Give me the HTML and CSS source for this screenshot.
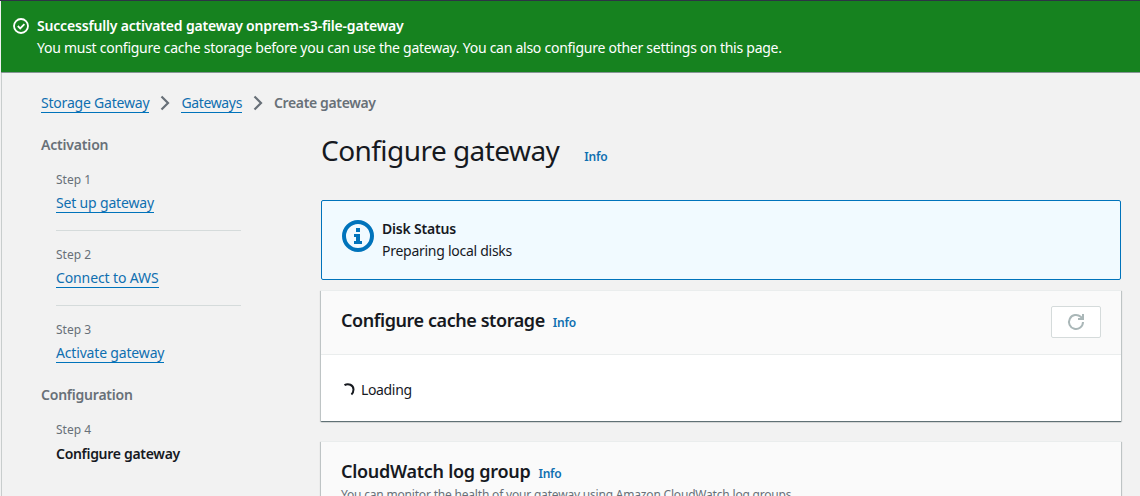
FILE: index.html
```html
<!DOCTYPE html>
<html lang="en">
<head>
<meta charset="utf-8">
<title>Configure gateway</title>
<link rel="stylesheet" href="styles.css">
</head>
<body>
<div class="flash">
  <svg class="flash-icon" viewBox="0 0 16 16"><circle cx="8" cy="8" r="7"/><path d="M4.8 8l2.4 2.4 4.2-4.3"/></svg>
  <div>
    <div class="flash-title"><span class="t-flash-title">Successfully activated gateway onprem-s3-file-gateway</span></div>
    <div><span class="t-flash-text">You must configure cache storage before you can use the gateway. You can also configure other settings on this page.</span></div>
  </div>
</div>
<div class="page">
  <nav class="breadcrumb">
    <a class="link t-crumb1">Storage Gateway</a>
    <svg class="chevron" viewBox="0 0 10 16"><path d="M1.5 1.5L8 8l-6.5 6.5"/></svg>
    <a class="link t-crumb2">Gateways</a>
    <svg class="chevron" viewBox="0 0 10 16"><path d="M1.5 1.5L8 8l-6.5 6.5"/></svg>
    <span class="current t-crumb3">Create gateway</span>
  </nav>
  <div class="columns">
    <aside class="steps">
      <div class="group t-activation">Activation</div>
      <div class="step divided"><div class="step-label">Step 1</div><a class="link t-setup">Set up gateway</a></div>
      <div class="step divided"><div class="step-label">Step 2</div><a class="link t-connect">Connect to AWS</a></div>
      <div class="step last"><div class="step-label">Step 3</div><a class="link t-activate">Activate gateway</a></div>
      <div class="group t-configuration">Configuration</div>
      <div class="step"><div class="step-label">Step 4</div><span class="active t-active">Configure gateway</span></div>
    </aside>
    <main class="content">
      <div class="heading"><h1>Configure gateway</h1><a class="info">Info</a></div>
      <section class="alert">
        <svg class="alert-icon" viewBox="0 0 32 32"><circle cx="16" cy="16" r="14"/><path d="M14 8h4v4h-4zM12 14h6v7h2v3h-8v-3h2v-4h-2z"/></svg>
        <div>
          <div><b class="t-disk">Disk Status</b></div>
          <div><span class="t-preparing">Preparing local disks</span></div>
        </div>
      </section>
      <section class="card">
        <header class="card-header">
          <div class="card-title"><h2 class="t-cache">Configure cache storage</h2><a class="info">Info</a></div>
          <button class="refresh" aria-label="Refresh">
            <svg viewBox="0 0 16 16"><path d="M15 8a7 7 0 1 1-2.3-5.2L15 5M15 0v5h-5"/></svg>
          </button>
        </header>
        <div class="card-body">
          <svg class="spinner" viewBox="0 0 16 16"><path d="M3.5 3.2C7.4.8 12.4 3 12.5 7.6c0 2-.8 3.7-2.1 4.8"/></svg>
          <span class="t-loading">Loading</span>
        </div>
      </section>
      <section class="card log-group">
        <header class="card-header">
          <div>
            <div class="card-title"><h2 class="t-log">CloudWatch log group</h2><a class="info">Info</a></div>
            <p class="description">You can monitor the health of your gateway using Amazon CloudWatch log groups.</p>
          </div>
        </header>
      </section>
    </main>
  </div>
</div>
</body>
</html>
```
FILE: styles.css
```css
* { box-sizing: border-box; }
body {
  margin: 0;
  height: 496px;
  overflow: hidden;
  border-top: 1px solid #2d3445;
  background: #f2f2f2;
  color: #16191f;
  font: 14px/22px "Noto Sans", "Open Sans", sans-serif;
  white-space: nowrap;
}
h1, h2, p { margin: 0; }
a { color: #0f6fb0; }

.flash {
  display: flex;
  gap: 8px;
  height: 72px;
  margin-left: 1px;
  padding: 14px 12px;
  border-bottom: 1px solid #879596;
  background: #16821f;
  color: #fff;
}
.flash-icon { width: 16px; height: 16px; margin-top: 3px; fill: none; stroke: #fff; stroke-width: 1.8; }
.flash-title { font-weight: 600; }

.page {
  height: 423px;
  overflow: hidden;
  margin-left: 1px;
  padding: 19px 19px 0 39px;
  border-left: 1px solid #c8cdcd;
}
.breadcrumb { display: flex; align-items: center; height: 22px; }
.breadcrumb .link { line-height: 18px; }
.chevron { width: 10px; height: 16px; margin: 0 11px; fill: none; stroke: #687078; stroke-width: 2.2; }
.link { display: inline-block; height: 19px; line-height: 20px; border-bottom: 1px solid #0073bb; }
.current, .group { color: #687078; font-weight: 600; }
.columns { display: flex; gap: 80px; margin-top: 20px; }

.steps { width: 200px; }
.step { height: 75px; margin-left: 15px; padding-top: 13px; }
.step.last { height: 78px; }
.divided { border-bottom: 1px solid #d5dbdb; }
.step-label { height: 22px; color: #687078; font-size: 12px; line-height: 22px; }
.step .link, .active { display: inline-block; margin-top: 2px; }
.step .link { height: 20px; }
.active { font-weight: 600; }

.content { flex: 1; }
.heading { display: flex; gap: 25px; align-items: baseline; height: 66px; }
h1 { font-size: 28px; font-weight: 400; line-height: 33px; }
.info { font-size: 12px; font-weight: 600; letter-spacing: -0.2px; }
.alert {
  display: flex;
  gap: 8px;
  height: 80px;
  padding: 17px 20px;
  border: 1px solid #0073bb;
  border-radius: 2px;
  background: #f1faff;
}
.alert-icon { width: 32px; height: 32px; margin-top: 2px; fill: #0073bb; }
.alert-icon circle { fill: none; stroke: #0073bb; stroke-width: 4; }
b { font-weight: 600; }

.card {
  margin-top: 10px;
  background: #fff;
  box-shadow: 0 1px 1px rgba(0, 28, 36, .45), 1px 1px 1px rgba(0, 28, 36, .15), -1px 1px 1px rgba(0, 28, 36, .15);
}
.card-header {
  display: flex;
  justify-content: space-between;
  height: 65px;
  padding: 15px 20px;
  border-top: 1px solid #eaeded;
  border-bottom: 1px solid #eaeded;
  background: #fafafa;
}
.card-title { display: flex; gap: 8px; align-items: baseline; height: 28px; }
h2 { font-size: 18px; font-weight: 600; line-height: 28px; }
.refresh {
  display: grid;
  place-items: center;
  width: 50px;
  height: 32px;
  margin: 0;
  padding: 0;
  border: 1px solid #d5dbdb;
  border-radius: 2px;
  background: #fff;
}
.refresh svg { width: 16px; height: 16px; overflow: visible; fill: none; stroke: #aab7b8; stroke-width: 2; }
.card-body { display: flex; gap: 4px; height: 66px; padding: 24px 20px; }
.spinner { width: 16px; height: 16px; margin-top: 3px; fill: none; stroke: #16191f; stroke-width: 2; }
.log-group { margin-top: 20px; }
.log-group .card-header { height: 90px; }
.description { margin-top: 1px; color: #687078; font-size: 12px; line-height: 18px; letter-spacing: -0.19px; }

/* Tracking per label */
.t-flash-title { letter-spacing: -0.18px; }
.t-flash-text { letter-spacing: -0.26px; }
.t-crumb1 { letter-spacing: -0.2px; }
.t-crumb2 { letter-spacing: -0.36px; }
.t-crumb3 { letter-spacing: -0.36px; }
.t-activation { letter-spacing: -0.18px; }
.t-setup { letter-spacing: -0.17px; }
.t-connect { letter-spacing: -0.12px; }
.t-activate { letter-spacing: -0.17px; }
.t-configuration { letter-spacing: -0.22px; }
.t-active { letter-spacing: -0.3px; }
h1 { letter-spacing: -0.55px; }
.t-disk { letter-spacing: -0.2px; }
.t-preparing { letter-spacing: -0.27px; }
.t-cache { letter-spacing: -0.43px; }
.t-loading { letter-spacing: -0.35px; }
.t-log { letter-spacing: -0.28px; }
```
